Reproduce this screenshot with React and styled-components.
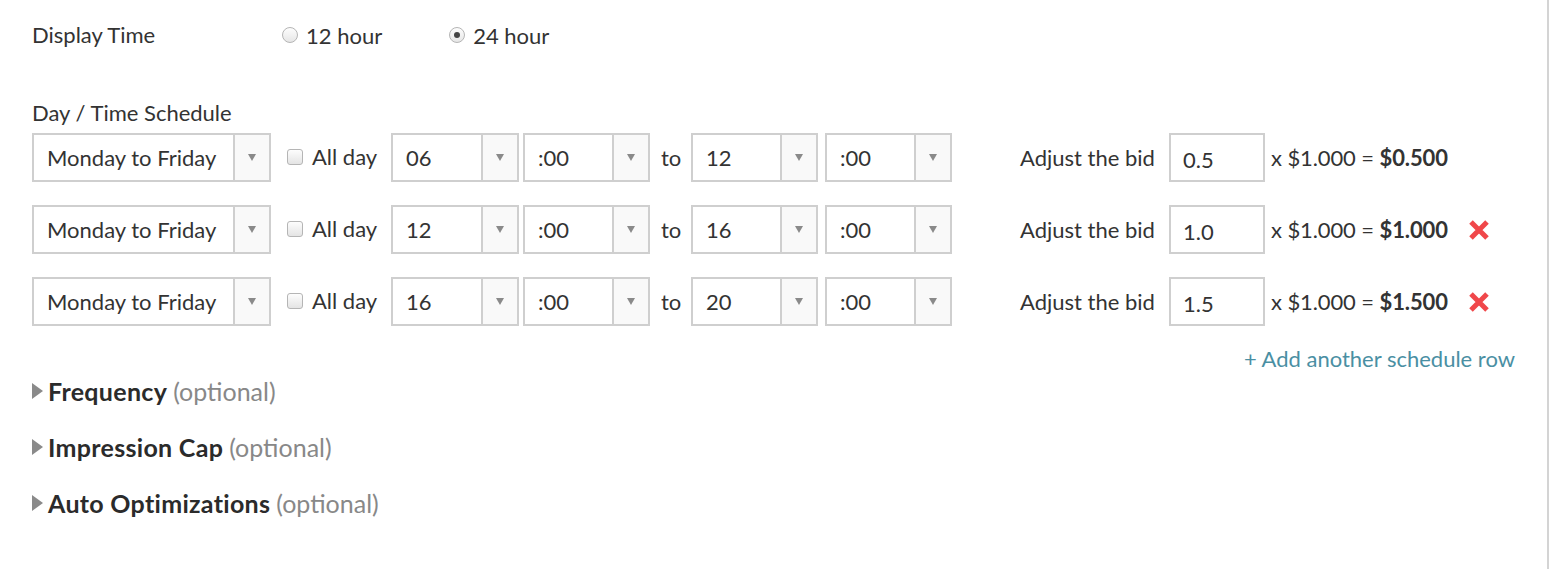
import React from "react";
import styled, { createGlobalStyle } from "styled-components";

const Global = createGlobalStyle`
  html, body { margin: 0; padding: 0; background: #fff; }
  body { font-family: Lato, "Open Sans", sans-serif; color: #333; }
  * { box-sizing: border-box; }
`;

const Panel = styled.div`
  width: 1549px;
  height: 569px;
  border-right: 2px solid #d4d4d4;
  padding: 0 32px;
  display: flex;
  flex-direction: column;
`;

const DisplayRow = styled.div`
  height: 70px;
  display: flex;
  align-items: center;
  font-size: 22px;
`;

const Label = styled.div`
  width: ${(p) => p.$w || "auto"};
  font-size: 22px;
  line-height: 24px;
  color: #333;
`;

const RadioLabel = styled.label`
  display: flex;
  align-items: center;
  margin-right: ${(p) => p.$mr || 0}px;
  font-size: 22px;
  color: #333;
`;

const RadioDot = styled.span`
  width: 16px;
  height: 16px;
  border-radius: 50%;
  border: 1px solid #b5b5b5;
  background: linear-gradient(#fdfdfd, #e6e6e6);
  margin-right: 8px;
  display: flex;
  align-items: center;
  justify-content: center;
  &::after {
    content: "";
    width: 6px;
    height: 6px;
    border-radius: 50%;
    background: ${(p) => (p.$checked ? "#444" : "transparent")};
  }
`;

const SectionLabel = styled(Label)`
  margin-top: 31px;
`;

const Rows = styled.div`
  margin-top: 8px;
  display: flex;
  flex-direction: column;
  gap: 23px;
`;

const Row = styled.div`
  display: flex;
  align-items: center;
  height: 49px;
`;

const Select = styled.div`
  width: ${(p) => p.$w}px;
  height: 49px;
  margin-left: ${(p) => p.$ml || 0}px;
  border: 2px solid #cfcfcf;
  display: flex;
  background: #fff;
  flex-shrink: 0;
`;

const SelectValue = styled.div`
  flex: 1;
  display: flex;
  align-items: center;
  padding-left: 13px;
  font-size: 22px;
  color: #333;
`;

const SelectArrow = styled.div`
  width: 36px;
  border-left: 2px solid #cfcfcf;
  background: #f9f9f9;
  display: flex;
  align-items: center;
  justify-content: center;
  &::after {
    content: "";
    border-left: 4px solid transparent;
    border-right: 4px solid transparent;
    border-top: 7px solid #8a8a8a;
  }
`;

const CheckLabel = styled.label`
  display: flex;
  align-items: center;
  margin-left: 16px;
  font-size: 22px;
  color: #333;
  width: 105px;
  flex-shrink: 0;
  padding-bottom: 2px;
`;

const CheckBox = styled.span`
  width: 16px;
  height: 16px;
  border-radius: 3px;
  border: 1px solid #b5b5b5;
  background: linear-gradient(#fdfdfd, #e4e4e4);
  margin-right: 9px;
`;

const To = styled.span`
  font-size: 22px;
  color: #333;
  margin-left: 11px;
  width: 30px;
  flex-shrink: 0;
`;

const BidLabel = styled.span`
  margin-left: 68px;
  font-size: 22px;
  color: #333;
  width: 149px;
  flex-shrink: 0;
`;

const BidInput = styled.div`
  width: 96px;
  height: 49px;
  border: 2px solid #cfcfcf;
  display: flex;
  align-items: center;
  padding: 4px 0 0 12px;
  font-size: 22px;
  color: #333;
  flex-shrink: 0;
`;

const Calc = styled.span`
  margin-left: 6px;
  font-size: 22px;
  color: #333;
  letter-spacing: -0.1px;
  b { font-weight: 700; }
`;

const Remove = styled.span`
  margin-left: 20px;
  display: flex;
  align-items: center;
`;

const AddLink = styled.a`
  align-self: flex-end;
  margin-top: 21px;
  font-size: 22px;
  line-height: 24px;
  color: #4a8fa3;
  text-decoration: none;
`;

const Toggles = styled.div`
  margin-top: 6px;
  display: flex;
  flex-direction: column;
  gap: 28px;
`;

const Toggle = styled.div`
  display: flex;
  align-items: center;
  height: 28px;
  font-size: 25px;
`;

const Tri = styled.span`
  width: 0;
  height: 0;
  border-top: 8px solid transparent;
  border-bottom: 8px solid transparent;
  border-left: 11px solid #8a8a8a;
  margin-right: 5px;
`;

const ToggleTitle = styled.span`
  font-weight: 700;
  color: #2b2b2b;
  letter-spacing: 0.3px;
`;

const Optional = styled.span`
  margin-left: 6px;
  color: #888;
`;

const XIcon = () => (
  <svg width="22" height="22" viewBox="0 0 22 22">
    <path d="M3 3 L19 19 M19 3 L3 19" stroke="#f0474a" strokeWidth="5" strokeLinecap="butt" />
  </svg>
);

const Sel = ({ w, ml, value }) => (
  <Select $w={w} $ml={ml}>
    <SelectValue>{value}</SelectValue>
    <SelectArrow />
  </Select>
);

const rows = [
  { from: "06", to: "12", bid: "0.5", total: "$0.500", removable: false },
  { from: "12", to: "16", bid: "1.0", total: "$1.000", removable: true },
  { from: "16", to: "20", bid: "1.5", total: "$1.500", removable: true },
];

export default function App() {
  return (
    <>
      <Global />
      <Panel>
        <DisplayRow>
          <Label $w="250px">Display Time</Label>
          <RadioLabel $mr={67}>
            <RadioDot />
            12 hour
          </RadioLabel>
          <RadioLabel>
            <RadioDot $checked />
            24 hour
          </RadioLabel>
        </DisplayRow>
        <SectionLabel>Day / Time Schedule</SectionLabel>
        <Rows>
          {rows.map((r, i) => (
            <Row key={i}>
              <Sel w={239} value="Monday to Friday" />
              <CheckLabel>
                <CheckBox />
                All day
              </CheckLabel>
              <Sel w={128} ml={-1} value={r.from} />
              <Sel w={127} ml={4} value=":00" />
              <To>to</To>
              <Sel w={127} value={r.to} />
              <Sel w={127} ml={7} value=":00" />
              <BidLabel>Adjust the bid</BidLabel>
              <BidInput>{r.bid}</BidInput>
              <Calc>
                x $1.000 = <b>{r.total}</b>
              </Calc>
              {r.removable && (
                <Remove>
                  <XIcon />
                </Remove>
              )}
            </Row>
          ))}
        </Rows>
        <AddLink href="#">+ Add another schedule row</AddLink>
        <Toggles>
          <Toggle>
            <Tri />
            <ToggleTitle>Frequency</ToggleTitle>
            <Optional>(optional)</Optional>
          </Toggle>
          <Toggle>
            <Tri />
            <ToggleTitle>Impression Cap</ToggleTitle>
            <Optional>(optional)</Optional>
          </Toggle>
          <Toggle>
            <Tri />
            <ToggleTitle>Auto Optimizations</ToggleTitle>
            <Optional>(optional)</Optional>
          </Toggle>
        </Toggles>
      </Panel>
    </>
  );
}
